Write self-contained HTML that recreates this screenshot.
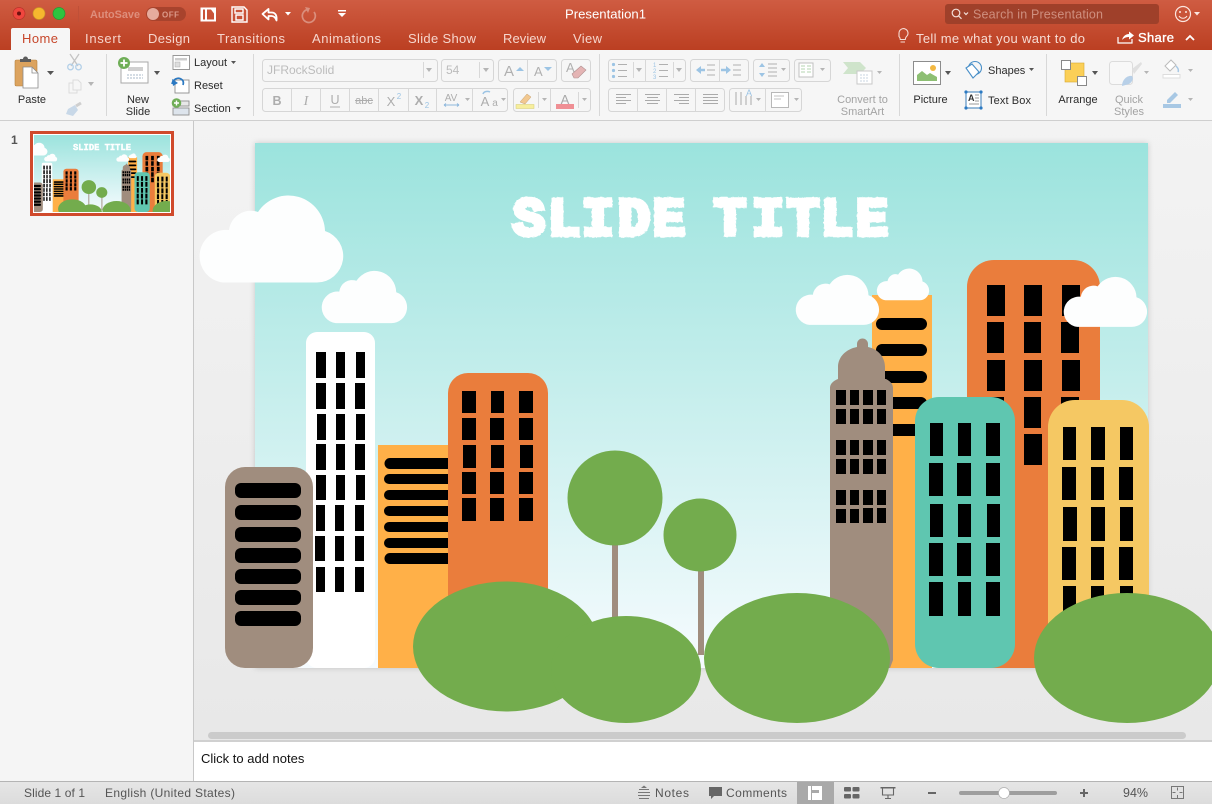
<!DOCTYPE html>
<html>
<head>
<meta charset="utf-8">
<title>Presentation1</title>
<style>
html,body{margin:0;padding:0;width:1212px;height:804px;overflow:hidden;background:#eee}
svg{display:block;font-family:"Liberation Sans",sans-serif}
.tab{font-size:13px;fill:#f6d6cd}
.rb{font-size:11px;fill:#2b2b2b}
.dim{font-size:11px;fill:#a3a3a3}
.st{font-size:12px;fill:#555}
.box{fill:#f6f6f6;stroke:#d6d6d6;stroke-width:1}
.sep{stroke:#d8d8d8;stroke-width:1}
.g{fill:none;stroke:#b4b4b4;stroke-width:1}
.car{fill:#555}
.cdim{fill:#b5b5b5}
.bl{fill:#9cc4e4}
</style>
</head>
<body>
<svg width="1212" height="804" viewBox="0 0 1212 804" xmlns="http://www.w3.org/2000/svg">
<defs>
<linearGradient id="top" x1="0" y1="0" x2="0" y2="1"><stop offset="0" stop-color="#cf5c42"/><stop offset="1" stop-color="#bb3f22"/></linearGradient>
<linearGradient id="sky" x1="0" y1="0" x2="0" y2="1"><stop offset="0" stop-color="#9be3dd"/><stop offset="1" stop-color="#f6fbfe"/></linearGradient>
<linearGradient id="work" x1="0" y1="0" x2="0" y2="1"><stop offset="0" stop-color="#f3f3f3"/><stop offset="1" stop-color="#e8e8e8"/></linearGradient>
<linearGradient id="stat" x1="0" y1="0" x2="0" y2="1"><stop offset="0" stop-color="#e6e6e6"/><stop offset="1" stop-color="#dcdcdc"/></linearGradient>
<filter id="sh" x="-5%" y="-5%" width="110%" height="110%"><feDropShadow dx="0" dy="0" stdDeviation="3" flood-color="#000" flood-opacity=".18"/></filter>
<filter id="rough" x="-5%" y="-20%" width="110%" height="140%"><feTurbulence type="fractalNoise" baseFrequency=".28" numOctaves="2" seed="4"/><feDisplacementMap in="SourceGraphic" scale="2.500"/></filter>
<path id="cl" d="M23 88.500A26.400 26.400 0 0 1 29 36A22 22 0 0 1 58 18A36.500 36.500 0 0 1 125 37A26.400 26.400 0 0 1 117 88.500Z" fill="#fdfefe"/>
<g id="scene">
<rect x="255" y="143" width="893" height="525" fill="url(#sky)"/>
<!-- back right -->
<path d="M872 295h60v373h-60z" fill="#ffb048"/>
<path d="M876 324a6 6 0 0 1 6-6h39a6 6 0 0 1 6 6v0a6 6 0 0 1-6 6h-39a6 6 0 0 1-6-6zM876 350a6 6 0 0 1 6-6h39a6 6 0 0 1 6 6v0a6 6 0 0 1-6 6h-39a6 6 0 0 1-6-6zM876 377a6 6 0 0 1 6-6h39a6 6 0 0 1 6 6v0a6 6 0 0 1-6 6h-39a6 6 0 0 1-6-6zM876 403a6 6 0 0 1 6-6h39a6 6 0 0 1 6 6v0a6 6 0 0 1-6 6h-39a6 6 0 0 1-6-6zM876 430a6 6 0 0 1 6-6h39a6 6 0 0 1 6 6v0a6 6 0 0 1-6 6h-39a6 6 0 0 1-6-6z" fill="#000"/>
<path d="M967 287a27 27 0 0 1 27-27h79a27 27 0 0 1 27 27v381h-133z" fill="#ea7d3c"/>
<path fill="#000" d="M987 285h18v31h-18zM1024 285h18v31h-18zM1062 285h18v31h-18zM987 322h17v31h-17zM1024 322h17v31h-17zM1061 322h18v31h-18zM987 360h18v31h-18zM1024 360h18v31h-18zM1062 360h18v31h-18zM987 397h17v31h-17zM1024 397h17v31h-17zM1061 397h18v31h-18zM1024 434h18v31h-18z"/>
<!-- gray tower -->
<path d="M857 347v-3a5.500 5.500 0 0 1 11 0v3c10 2 17 10 17 20v12h1c4 2 7 5 7 9v272l-3 8h-60v-280c0-4 3-7 8-9v-12c0-10 8-18 19-20z" fill="#a08d7e"/>
<path fill="#000" d="M836 390h10v15h-10zM850 390h9v15h-9zM863 390h10v15h-10zM877 390h9v15h-9zM836 409h10v15h-10zM850 409h9v15h-9zM863 409h10v15h-10zM877 409h9v15h-9zM836 440h10v15h-10zM850 440h9v15h-9zM863 440h10v15h-10zM877 440h9v15h-9zM836 459h10v15h-10zM850 459h9v15h-9zM863 459h10v15h-10zM877 459h9v15h-9zM836 490h10v15h-10zM850 490h9v15h-9zM863 490h10v15h-10zM877 490h9v15h-9zM836 509h10v14h-10zM850 509h9v14h-9zM863 508h10v15h-10zM877 508h9v15h-9z"/>
<!-- teal -->
<rect x="915" y="397" width="100" height="271" rx="24" fill="#5fc6b0"/>
<path fill="#000" d="M930 423h13v33h-13zM958 423h13v33h-13zM986 423h14v33h-14zM929 463h14v33h-14zM957 463h14v33h-14zM986 463h14v33h-14zM930 504h13v33h-13zM958 504h13v33h-13zM987 504h13v33h-13zM929 543h14v33h-14zM957 543h14v33h-14zM986 543h14v33h-14zM929 582h14v34h-14zM958 582h13v34h-13zM986 582h14v34h-14z"/>
<!-- yellow -->
<path d="M1048 427a27 27 0 0 1 27-27h47a27 27 0 0 1 27 27v241h-101z" fill="#f5c863"/>
<path fill="#000" d="M1063 427h13v33h-13zM1091 427h14v33h-14zM1120 427h13v33h-13zM1062 467h14v33h-14zM1091 467h13v33h-13zM1119 467h14v33h-14zM1063 507h14v34h-14zM1091 507h14v34h-14zM1120 507h13v34h-13zM1062 547h14v33h-14zM1091 547h13v33h-13zM1119 547h14v33h-14zM1063 586h13v34h-13zM1091 586h13v34h-13zM1120 586h13v34h-13z"/>
<!-- left buildings -->
<rect x="306" y="332" width="69" height="336" rx="11" fill="#fff"/>
<path fill="#000" d="M316 352h10v26h-10zM336 352h9v26h-9zM356 352h9v26h-9zM316 383h10v26h-10zM336 383h9v26h-9zM355 383h10v26h-10zM317 414h9v26h-9zM336 414h9v26h-9zM356 414h9v26h-9zM316 444h10v26h-10zM336 444h9v26h-9zM355 444h10v26h-10zM316 475h10v25h-10zM336 475h9v25h-9zM356 475h9v25h-9zM316 505h9v26h-9zM335 505h9v26h-9zM355 505h9v26h-9zM315 536h10v25h-10zM335 536h9v25h-9zM355 536h9v25h-9zM316 567h9v25h-9zM335 567h9v25h-9zM355 567h9v25h-9z"/>
<rect x="378" y="445" width="90" height="223" fill="#ffb048"/>
<path fill="#000" d="M390 458h70v11h-70a5.500 5.500 0 0 1 0-11zM389 474h70v10h-70a5 5 0 0 1 0-10zM389 490h70v10h-70a5 5 0 0 1 0-10zM389 506h70v10h-70a5 5 0 0 1 0-10zM389 522h70v10h-70a5 5 0 0 1 0-10zM389 538h70v10h-70a5 5 0 0 1 0-10zM390 553h70v11h-70a5.500 5.500 0 0 1 0-11z"/>
<path d="M448 393a20 20 0 0 1 20-20h60a20 20 0 0 1 20 20v275h-100z" fill="#ea7d3c"/>
<path fill="#000" d="M462 391h14v22h-14zM491 391h13v22h-13zM519 391h14v22h-14zM462 418h14v22h-14zM490 418h14v22h-14zM519 418h14v22h-14zM463 445h13v23h-13zM491 445h13v23h-13zM520 445h13v23h-13zM462 472h14v22h-14zM490 472h14v22h-14zM519 472h14v22h-14zM462 498h14v23h-14zM490 498h14v23h-14zM519 498h14v23h-14z"/>
<rect x="225" y="467" width="88" height="201" rx="20" fill="#a08d7e"/>
<g fill="#000"><rect x="235" y="483" width="66" height="15" rx="6"/><rect x="235" y="505" width="66" height="15" rx="6"/><rect x="235" y="527" width="66" height="15" rx="6"/><rect x="235" y="548" width="66" height="15" rx="6"/><rect x="235" y="569" width="66" height="15" rx="6"/><rect x="235" y="590" width="66" height="15" rx="6"/><rect x="235" y="611" width="66" height="15" rx="6"/></g>
<!-- trees -->
<rect x="612" y="530" width="6" height="95" fill="#a08d7e"/>
<rect x="698" y="555" width="6" height="100" fill="#a08d7e"/>
<circle cx="615" cy="498" r="47.500" fill="#73ac4d"/>
<circle cx="700" cy="535" r="36.500" fill="#73ac4d"/>
<!-- hills -->
<ellipse cx="506" cy="646.500" rx="93" ry="65" fill="#73ac4d"/>
<ellipse cx="626" cy="669.500" rx="75" ry="53.500" fill="#73ac4d"/>
<ellipse cx="797" cy="658" rx="93" ry="65" fill="#73ac4d"/>
<ellipse cx="1127" cy="658" rx="93" ry="65" fill="#73ac4d"/>
<!-- clouds -->
<use href="#cl" transform="translate(200 194)"/>
<use href="#cl" transform="translate(322 270) scale(.594 .6)"/>
<use href="#cl" transform="translate(796 274) scale(.58 .575)"/>
<use href="#cl" transform="translate(877 268) scale(.364 .365)"/>
<use href="#cl" transform="translate(1064 276) scale(.58 .575)"/>
</g>
</defs>

<!-- base areas -->
<rect width="1212" height="804" fill="#f5f5f5"/>
<rect x="194" y="121" width="1018" height="620" fill="url(#work)"/>
<rect x="193" y="121" width="1" height="660" fill="#c8c8c8"/>
<rect x="194" y="741" width="1018" height="40" fill="#fff"/>
<rect x="194" y="740" width="1018" height="2" fill="#d0d0d0"/>
<rect x="208" y="732" width="978" height="7" rx="3.500" fill="#cbcbcb"/>
<!-- slide -->
<rect x="255" y="143" width="893" height="525" fill="#fff" filter="url(#sh)"/>
<use href="#scene"/>
<text y="235" x="529 564 598 634 669 700 730 768 803 837 872" text-anchor="middle" font-family="Liberation Mono" font-weight="700" font-size="54" fill="#fff" stroke="#fff" stroke-width="4.500" filter="url(#rough)">SLIDE TITLE</text>

<!-- top bar -->
<rect width="1212" height="50" fill="url(#top)"/>
<circle cx="19" cy="13.500" r="6" fill="#f0463e" stroke="#b8332a" stroke-width=".7"/><circle cx="19" cy="13.500" r="2" fill="#6e1210"/>
<circle cx="39" cy="13.500" r="6" fill="#f6b72e" stroke="#c9912a" stroke-width=".7"/>
<circle cx="59" cy="13.500" r="6" fill="#2ec43f" stroke="#269a33" stroke-width=".7"/>
<rect x="78" y="6" width="1" height="16" fill="#bf5038"/>
<text x="90" y="18" font-size="11" font-weight="700" fill="#de8e7c" textLength="50" lengthAdjust="spacingAndGlyphs">AutoSave</text>
<rect x="146" y="7" width="40" height="14" rx="7" fill="#a8432d"/>
<circle cx="153" cy="14" r="6" fill="#e6ab9d"/>
<text x="162" y="17.500" font-size="8" font-weight="700" fill="#dc9a8a" letter-spacing=".5">OFF</text>
<!-- qat icons -->
<path d="M200.500 7.500h15.500v14h-15.500z M203 9.500v10h2v-10z M207 9.500v10h7v-6l-3-4z" fill="#fff" fill-rule="evenodd"/>
<path d="M232 7h12l3 3v12h-15z M235 9v4h8V9z M236 15v5h7v-5z" fill="none" stroke="#fff" stroke-width="1.400"/>
<path d="M262.500 14l6-5v3.500h3c4 0 5.500 3 5 8-1-3-2.500-4.500-5-4.500h-3v3.500z" fill="none" stroke="#fff" stroke-width="1.800" stroke-linejoin="round"/>
<path d="M285 12h6l-3 3.500z" fill="#fff"/>
<path d="M308 9.500a6.500 6.500 0 1 0 6 2.500" fill="none" stroke="#da8f7d" stroke-width="1.700"/><path d="M305 7l5 1-2 5z" fill="#da8f7d"/>
<path d="M338 10h8v1.500h-8zM338 13h8l-4 4z" fill="#fff"/>
<text x="605.500" y="18.500" font-size="13" fill="#fff" text-anchor="middle" textLength="81" lengthAdjust="spacingAndGlyphs">Presentation1</text>
<!-- search -->
<rect x="945" y="4" width="214" height="20" rx="3" fill="#9f402a"/>
<circle cx="956" cy="13" r="3.800" fill="none" stroke="#f3e0da" stroke-width="1.200"/><path d="M958.500 15.800l3 3M964 12.500l2 2 2-2" fill="none" stroke="#f3e0da" stroke-width="1.200"/>
<text x="973" y="18.500" font-size="12.500" fill="#cf8f7f" textLength="130" lengthAdjust="spacing">Search in Presentation</text>
<!-- smiley -->
<circle cx="1183" cy="14" r="7.500" fill="none" stroke="#fbe6e0" stroke-width="1.200"/><circle cx="1180" cy="12" r="1" fill="#fbe6e0"/><circle cx="1186" cy="12" r="1" fill="#fbe6e0"/><path d="M1179 16c2 3 6 3 8 0" fill="none" stroke="#fbe6e0" stroke-width="1.100"/>
<path d="M1194 12h6l-3 3.500z" fill="#fbe6e0"/>
<!-- tabs -->
<path d="M11 50V30a2 2 0 0 1 2-2h55a2 2 0 0 1 2 2v20z" fill="#f6f6f6"/>
<text x="22" y="43" font-size="13" fill="#c7472b" textLength="36" lengthAdjust="spacing">Home</text>
<text x="85" y="43" class="tab" textLength="36" lengthAdjust="spacing">Insert</text>
<text x="148" y="43" class="tab" textLength="42" lengthAdjust="spacing">Design</text>
<text x="217" y="43" class="tab" textLength="68" lengthAdjust="spacing">Transitions</text>
<text x="312" y="43" class="tab" textLength="69" lengthAdjust="spacing">Animations</text>
<text x="408" y="43" class="tab" textLength="68" lengthAdjust="spacing">Slide Show</text>
<text x="503" y="43" class="tab" textLength="43" lengthAdjust="spacing">Review</text>
<text x="573" y="43" class="tab" textLength="29" lengthAdjust="spacing">View</text>
<path d="M899 36a4.500 4.500 0 1 1 7.500 3.500c-1 1-1.200 2-1.200 3h-5c0-1-.3-2-1.300-3z M900.500 45h4.500" transform="translate(0 -3)" fill="none" stroke="#f6dbd3" stroke-width="1.100"/>
<text x="916" y="43" font-size="13" fill="#f6dbd3" textLength="169" lengthAdjust="spacing">Tell me what you want to do</text>
<path d="M1118 37v6h14v-4" fill="none" stroke="#fff" stroke-width="1.200"/><path d="M1122 40c1-4 4-6 7-6v-2.500l5 4-5 4v-2.500c-3 0-5 1-7 3z" fill="#fff"/>
<text x="1138" y="42" font-size="13" fill="#fff" stroke="#fff" stroke-width=".35" textLength="36" lengthAdjust="spacing">Share</text>
<path d="M1186 40l4-4 4 4" fill="none" stroke="#fff" stroke-width="1.800"/>

<!-- ribbon -->
<rect y="50" width="1212" height="70" fill="#f6f6f6"/>
<rect y="120" width="1212" height="1" fill="#cfcfcf"/>
<g class="sep"><path d="M106.500 54v62M253.500 54v62M599.500 54v62M899.500 54v62M1046.500 54v62"/></g>
<!-- paste -->
<rect x="15" y="60" width="22" height="26" rx="1.500" fill="#dca35e" stroke="#b5823f" stroke-width=".6"/>
<path d="M20 62v-3h3a2.500 2.500 0 0 1 5 0h3v3z" fill="#5d5d5d"/>
<path d="M23 67h9l6 6v15H23z" fill="#fff" stroke="#8a8a8a" stroke-width=".8"/><path d="M32 67v6h6" fill="none" stroke="#8a8a8a" stroke-width=".8"/>
<path d="M47 71h7l-3.500 4z" class="car"/>
<text x="32" y="103" class="rb" text-anchor="middle">Paste</text>
<g fill="none" stroke="#c4c4c4" stroke-width="1.300"><path d="M70 54l8 12M79 54l-8 12"/><circle cx="70.500" cy="67" r="2.800" stroke="#b4d0e8"/><circle cx="78.500" cy="67" r="2.800" stroke="#b4d0e8"/>
<path d="M73 80h5l3 3v7h-8zM73 83h-4v10h8v-3" stroke="#dcdcdc" stroke-width="1"/>
<path d="M76 106l5-3" stroke="#cfcfcf" stroke-width="3"/></g>
<path d="M68 109l7-4 3 5-5 6-7-2z" fill="#c8d8e8"/>
<path d="M88 82h6l-3 4z" class="cdim"/>
<!-- new slide -->
<rect x="121" y="62" width="27" height="21" fill="#fff" stroke="#a8a8a8"/><rect x="128" y="67" width="15" height="4" fill="#d0d0d0"/><path d="M127 75h16M127 78h16" stroke="#a8b8c8" stroke-dasharray="2 1"/>
<circle cx="124" cy="63" r="6" fill="#6fae57"/><path d="M124 59.500v7M120.500 63h7" stroke="#fff" stroke-width="1.800"/>
<path d="M154 71h6l-3 4z" class="car"/>
<text x="138" y="103" class="rb" text-anchor="middle">New</text><text x="138" y="115" class="rb" text-anchor="middle">Slide</text>
<!-- layout reset section -->
<g fill="#fff" stroke="#8e8e8e" stroke-width=".9"><rect x="173" y="55.500" width="16.500" height="14"/><rect x="175" y="58" width="12" height="2.500" fill="#ccc" stroke="none"/><rect x="175" y="62" width="5" height="5" fill="#ddd" stroke="#aaa" stroke-width=".5"/>
<rect x="175" y="80" width="14" height="13"/><rect x="173" y="101" width="16" height="5" fill="#e8e8e8"/><rect x="173" y="108" width="16" height="7" fill="#dde4ec"/></g>
<path d="M172 84c1-5 6-7 9-5 2 1 3 3 2 6" fill="none" stroke="#2b79c2" stroke-width="1.700"/><path d="M172 79l1 7 5-3z" fill="#2b79c2"/>
<circle cx="176.500" cy="103" r="4.800" fill="#6fae57"/><path d="M176.500 100.500v5M174 103h5" stroke="#fff" stroke-width="1.400"/>
<text x="194" y="66" class="rb">Layout</text><path d="M231 61h5l-2.500 3z" class="car"/>
<text x="194" y="89" class="rb">Reset</text>
<text x="194" y="112" class="rb">Section</text><path d="M236 107h5l-2.500 3z" class="car"/>
<!-- font row1 -->
<rect x="262.500" y="59.500" width="175" height="22" rx="3" class="box"/>
<text x="267" y="74" font-size="12" fill="#bcbcbc">JFRockSolid</text><path d="M426 68h6l-3 4z" class="cdim"/><path d="M423.500 62v16" class="sep"/>
<rect x="441.500" y="59.500" width="52" height="22" rx="3" class="box"/>
<text x="446" y="74" font-size="12" fill="#bcbcbc">54</text><path d="M483 68h6l-3 4z" class="cdim"/><path d="M479.500 62v16" class="sep"/>
<rect x="498.500" y="59.500" width="58" height="22" rx="3" class="box"/><path d="M527.500 59.500v22" class="sep"/>
<text x="504" y="76" font-size="15" fill="#b0b0b0">A</text><path d="M516 71l4-4 4 4z" fill="#9cc4e4"/>
<text x="534" y="76" font-size="13" fill="#b0b0b0">A</text><path d="M544 67h8l-4 4z" fill="#9cc4e4"/>
<rect x="561.500" y="59.500" width="29" height="22" rx="3" class="box"/>
<text x="566" y="72" font-size="13" fill="#b0b0b0">A</text><path d="M572 74l9-8 5 4-8 8h-4z" fill="#e4b4b4" stroke="#b09090" stroke-width=".6"/>
<!-- font row2 -->
<rect x="262.500" y="88.500" width="245" height="23" rx="3" class="box"/>
<path d="M291.500 88.500v23M320.500 88.500v23M349.500 88.500v23M378.500 88.500v23M408.500 88.500v23M436.500 88.500v23M472.500 88.500v23" class="sep"/>
<g font-size="12.500" fill="#adadad" text-anchor="middle">
<text x="277" y="105" font-weight="700">B</text>
<text x="306" y="105" font-style="italic" font-family="Liberation Serif" font-size="14">I</text>
<text x="335" y="104">U</text><path d="M330 107h10" stroke="#adadad"/>
<text x="364" y="104" font-size="11">abc</text><path d="M355 100.500h18" stroke="#adadad"/>
<text x="391" y="106" font-size="13">X</text><text x="399" y="99" font-size="8" fill="#9cc4e4">2</text>
<text x="419" y="105" font-size="13" font-weight="700">X</text><text x="427" y="108" font-size="8" fill="#9cc4e4">2</text>
<text x="451" y="101" font-size="10">AV</text>
<text x="485" y="106" font-size="13">A</text><text x="495" y="106" font-size="10">a</text>
</g>
<path d="M444 105h15M444 105l2-1.500M444 105l2 1.500M459 105l-2-1.500M459 105l-2 1.500" stroke="#8eb8dc" fill="none"/>
<path d="M465 98h5l-2.500 3zM501 98h5l-2.500 3z" class="cdim"/>
<path d="M483 94c1-3 5-3 7-2" fill="none" stroke="#9cc4e4" stroke-width="1.500"/>
<rect x="513.500" y="88.500" width="77" height="23" rx="3" class="box"/>
<path d="M550.500 88.500v23M538.500 92v16M578.500 92v16" class="sep"/>
<path d="M520 102l7-8 4 3-6 7z" fill="#f2c890" stroke="#c4a070" stroke-width=".5"/><rect x="516" y="104.500" width="18" height="4" fill="#f7ee9c" stroke="#d4cc70" stroke-width=".5"/>
<path d="M542 98h5l-2.500 3zM582 98h5l-2.500 3z" class="cdim"/>
<text x="565" y="104" font-size="13" fill="#a8a8a8" text-anchor="middle">A</text><rect x="556" y="104" width="18" height="5" fill="#ef8f94"/>
<!-- lists -->
<rect x="608.500" y="59.500" width="77" height="22" rx="3" class="box"/>
<path d="M645.500 59.500v22M633.500 62v16M673.500 62v16" class="sep"/>
<path d="M618 64.500h9M618 70.500h9M618 76.500h9M659 64.500h9M659 70.500h9M659 76.500h9" stroke="#b0b0b0"/>
<circle cx="613.500" cy="64.500" r="1.600" fill="#9cc4e4"/><circle cx="613.500" cy="70.500" r="1.600" fill="#9cc4e4"/><circle cx="613.500" cy="76.500" r="1.600" fill="#9cc4e4"/>
<text x="653" y="67" font-size="6" fill="#9cc4e4">1</text><text x="653" y="73" font-size="6" fill="#9cc4e4">2</text><text x="653" y="79" font-size="6" fill="#9cc4e4">3</text>
<path d="M636 68h6l-3 4zM676 68h6l-3 4z" class="cdim"/>
<rect x="690.500" y="59.500" width="58" height="22" rx="3" class="box"/><path d="M719.500 59.500v22" class="sep"/>
<path d="M696 70l5-4v8zM726 66l5 4-5 4z" fill="#9cc4e4"/><path d="M701 70h4M721 70h5" stroke="#9cc4e4" stroke-width="2.500"/>
<path d="M707 65h8M707 70h8M707 75h8M733 65h8M733 70h8M733 75h8" stroke="#b0b0b0"/>
<rect x="753.500" y="59.500" width="36" height="22" rx="3" class="box"/>
<path d="M759 67l3-4 3 4zM759 73l3 4 3-4z" fill="#9cc4e4"/><path d="M768 64h9M768 68h9M768 72h9M768 76h9" stroke="#b0b0b0"/><path d="M781 68h5l-2.500 3z" class="cdim"/>
<rect x="794.500" y="59.500" width="36" height="22" rx="3" class="box"/>
<rect x="799" y="63" width="14" height="14" fill="#fff" stroke="#c0c0c0"/><path d="M801 66h4M801 69h4M801 72h4M807 66h4M807 69h4M807 72h4" stroke="#b4d4b0"/><path d="M820 68h5l-2.500 3z" class="cdim"/>
<!-- align -->
<rect x="608.500" y="88.500" width="116" height="23" rx="3" class="box"/>
<path d="M637.500 88.500v23M666.500 88.500v23M695.500 88.500v23" class="sep"/>
<path stroke="#aaa" fill="none" d="M616 94.500h15M616 97.500h10M616 100.500h15M616 103.500h10M645 94.500h15M647 97.500h11M645 100.500h15M647 103.500h11M674 94.500h15M679 97.500h10M674 100.500h15M679 103.500h10M703 94.500h15M703 97.500h15M703 100.500h15M703 103.500h15"/>
<rect x="729.500" y="88.500" width="72" height="23" rx="3" class="box"/><path d="M765.500 88.500v23" class="sep"/>
<path d="M736 92v13M741 92v13M746 96v9M751 96v9" stroke="#aaa" fill="none"/><text x="749" y="96" font-size="9" fill="#9cc4e4" text-anchor="middle">A</text>
<path d="M756 98h5l-2.500 3zM794 98h5l-2.500 3z" class="cdim"/>
<rect x="771.500" y="92.500" width="17" height="15" fill="#fff" stroke="#b8b8b8"/><path d="M774 96h10M774 99h7" stroke="#c0c0c0"/>
<!-- smartart -->
<path d="M843 62h17l6 6-6 6h-17l5-6z" fill="#cfe4cb"/><rect x="857" y="71" width="15" height="13" fill="#fff" stroke="#c8c8c8"/><path d="M860 75h9M860 78h9M860 81h9" stroke="#c8d4e0" stroke-dasharray="2 1"/>
<path d="M877 71h5l-2.500 3z" class="cdim"/>
<text x="862.500" y="103" class="dim" text-anchor="middle">Convert to</text><text x="862.500" y="115" class="dim" text-anchor="middle">SmartArt</text>
<!-- picture -->
<rect x="913.500" y="61.500" width="27" height="23" fill="#fff" stroke="#8c8c8c"/>
<path d="M917 81v-6l5-4 5 4 3-2 7 4v4z" fill="#8dbf73"/><circle cx="933" cy="68" r="3" fill="#f3b842"/>
<path d="M945 71h6l-3 4z" class="car"/>
<text x="930.500" y="103" class="rb" text-anchor="middle">Picture</text>
<!-- shapes / textbox -->
<circle cx="975" cy="68" r="6.500" fill="none" stroke="#4a90c8" stroke-width="1.100"/><path d="M966 68l6-4 7 8-6 6z" fill="#fff" stroke="#4a90c8" stroke-width="1.100"/>
<text x="988" y="74" class="rb">Shapes</text><path d="M1029 68h5l-2.500 3z" class="car"/>
<rect x="966" y="92" width="15" height="16" fill="#fff" stroke="#3a7cb8"/>
<circle cx="966" cy="92" r="1.600" fill="#2b79c2"/><circle cx="981" cy="92" r="1.600" fill="#2b79c2"/><circle cx="966" cy="108" r="1.600" fill="#2b79c2"/><circle cx="981" cy="108" r="1.600" fill="#2b79c2"/>
<text x="968" y="101" font-size="9" font-weight="700" fill="#333">A</text><path d="M975 95h4M975 98h4M975 101h4M969 104h10" stroke="#999"/>
<text x="988" y="104" class="rb" textLength="43" lengthAdjust="spacing">Text Box</text>
<!-- arrange -->
<rect x="1065" y="63" width="19" height="19" fill="#fbcf57" stroke="#d8a830" stroke-width=".6"/>
<rect x="1061.500" y="60.500" width="9" height="9" fill="#fff" stroke="#888"/><rect x="1077.500" y="76.500" width="9" height="9" fill="#fff" stroke="#888"/>
<path d="M1092 71h6l-3 4z" class="car"/>
<text x="1078" y="103" class="rb" text-anchor="middle">Arrange</text>
<!-- quick styles -->
<rect x="1109.500" y="61.500" width="23" height="23" rx="3" fill="#f8f8f8" stroke="#dcdcdc"/>
<path d="M1132 69l9-7 1 2-8 10z" fill="#e0e0e0"/><path d="M1122 86c0-6 5-11 10-10 2 3 0 6-3 8z" fill="#b8d0e8"/>
<path d="M1144 71h5l-2.500 3z" class="cdim"/>
<text x="1129" y="103" class="dim" text-anchor="middle">Quick</text><text x="1129" y="115" class="dim" text-anchor="middle">Styles</text>
<path d="M1165 66l6-6 5 5-6 6z" fill="#fff" stroke="#bcbcbc"/><path d="M1176 66c2 2 3 4 2 6" stroke="#a8c8e4" fill="none" stroke-width="1.500"/><rect x="1163" y="74.500" width="17" height="3.500" fill="#fff" stroke="#ddd"/>
<path d="M1167 100l8-8 3 3-8 8h-3z" fill="#a8c8e4"/><rect x="1163" y="104" width="18" height="4" fill="#a8c8e4"/>
<path d="M1188 69h5l-2.500 3zM1188 98h5l-2.500 3z" class="cdim"/>

<!-- sidebar -->
<text x="11" y="144" font-size="12" font-weight="700" fill="#555">1</text>
<rect x="30" y="131" width="144" height="85" fill="#d04a2c"/>
<rect x="33" y="134" width="138" height="79" fill="#fff"/>
<svg x="34" y="135" width="136" height="77" viewBox="255 143 893 525" preserveAspectRatio="none"><use href="#scene"/></svg>
<text x="73" y="150" font-family="Liberation Mono" font-weight="700" font-size="9.500" fill="#fff" stroke="#fff" stroke-width=".4" textLength="58" lengthAdjust="spacingAndGlyphs">SLIDE TITLE</text>

<!-- notes -->
<text x="201" y="763" font-size="13" fill="#111">Click to add notes</text>

<!-- status -->
<rect y="781" width="1212" height="23" fill="url(#stat)"/>
<rect y="781" width="1212" height="1" fill="#b4b4b4"/>
<text x="24" y="797" class="st" textLength="61" lengthAdjust="spacing">Slide 1 of 1</text>
<text x="105" y="797" class="st" textLength="130" lengthAdjust="spacing">English (United States)</text>
<path d="M639 789.500h10M638 792.500h12M638 795.500h12M639 798.500h10" stroke="#777"/><path d="M641 788l3-2.500 3 2.500z" fill="#777"/>
<text x="655" y="797" class="st" textLength="34" lengthAdjust="spacing">Notes</text>
<path d="M709 787h13v9h-8l-3 3v-3h-2z" fill="#666"/>
<text x="726" y="797" class="st" textLength="61" lengthAdjust="spacing">Comments</text>
<rect x="797" y="782" width="37" height="22" fill="#a9a9a9"/>
<rect x="808" y="786" width="14" height="14" fill="#fff"/><rect x="812" y="790" width="7" height="3" fill="#a9a9a9"/><rect x="811" y="786" width="1" height="14" fill="#a9a9a9"/>
<g fill="#666"><rect x="844" y="787" width="7" height="4.500" rx="1"/><rect x="852.500" y="787" width="7" height="4.500" rx="1"/><rect x="844" y="794" width="7" height="4.500" rx="1"/><rect x="852.500" y="794" width="7" height="4.500" rx="1"/></g>
<path d="M881 788h14M882.500 788v7h11v-7M888 795v3M885 798.500h6" fill="none" stroke="#666" stroke-width="1.100"/><path d="M880.500 787h15v1.500h-15z" fill="#666"/>
<rect x="928" y="792" width="8" height="2" fill="#666"/>
<rect x="959" y="791" width="98" height="4" rx="2" fill="#9e9e9e"/>
<circle cx="1004" cy="793" r="5.500" fill="#fff" stroke="#b0b0b0" stroke-width=".7"/>
<path d="M1080 792h8v2h-8zM1083 789h2v8h-2z" fill="#666"/>
<text x="1123" y="797" font-size="12.500" fill="#555">94%</text>
<rect x="1171.500" y="786.500" width="12" height="12" fill="none" stroke="#777"/><path d="M1177.500 787.500v3M1177.500 795v3M1172.500 792.500h3M1179.500 792.500h3" stroke="#777"/>
</svg>
</body>
</html>
